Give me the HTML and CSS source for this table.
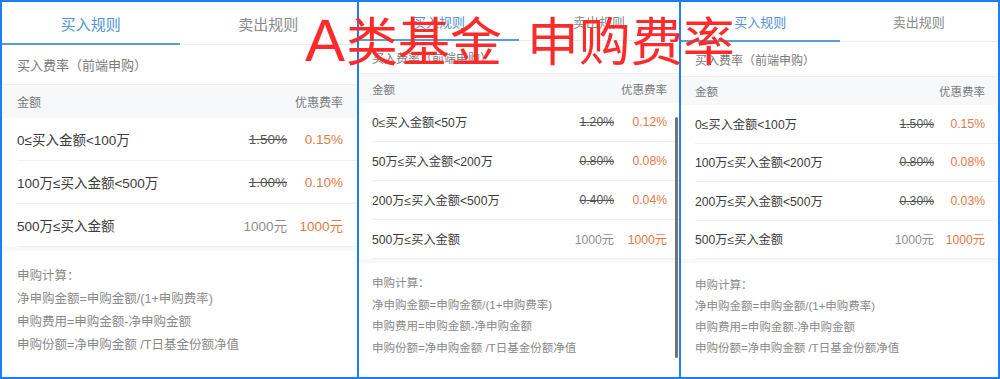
FILE: index.html
```html
<!DOCTYPE html>
<html lang="zh-CN">
<head>
<meta charset="utf-8">
<title>A类基金 申购费率</title>
<link rel="stylesheet" href="styles.css">
</head>
<body>
<div class="frame">
  <section class="panel p1">
    <div class="tabs"><div class="tab active">买入规则</div><div class="tab">卖出规则</div></div>
    <div class="subtitle">买入费率（前端申购）</div>
    <div class="thead"><span>金额</span><span>优惠费率</span></div>
    <div class="row"><span class="range">0≤买入金额&lt;100万</span><span class="old strike">1.50%</span><span class="new">0.15%</span></div>
    <div class="row"><span class="range">100万≤买入金额&lt;500万</span><span class="old strike">1.00%</span><span class="new">0.10%</span></div>
    <div class="row"><span class="range">500万≤买入金额</span><span class="old">1000元</span><span class="new">1000元</span></div>
    <div class="calc">
      <p>申购计算：</p>
      <p>净申购金额=申购金额/(1+申购费率)</p>
      <p>申购费用=申购金额-净申购金额</p>
      <p>申购份额=净申购金额 /T日基金份额净值</p>
    </div>
  </section>
  <section class="panel p2">
    <div class="tabs"><div class="tab active">买入规则</div><div class="tab">卖出规则</div></div>
    <div class="subtitle">买入费率（前端申购）</div>
    <div class="thead"><span>金额</span><span>优惠费率</span></div>
    <div class="row"><span class="range">0≤买入金额&lt;50万</span><span class="old strike">1.20%</span><span class="new">0.12%</span></div>
    <div class="row"><span class="range">50万≤买入金额&lt;200万</span><span class="old strike">0.80%</span><span class="new">0.08%</span></div>
    <div class="row"><span class="range">200万≤买入金额&lt;500万</span><span class="old strike">0.40%</span><span class="new">0.04%</span></div>
    <div class="row"><span class="range">500万≤买入金额</span><span class="old">1000元</span><span class="new">1000元</span></div>
    <div class="calc">
      <p>申购计算：</p>
      <p>净申购金额=申购金额/(1+申购费率)</p>
      <p>申购费用=申购金额-净申购金额</p>
      <p>申购份额=净申购金额 /T日基金份额净值</p>
    </div>
    <div class="scrollbar"></div>
  </section>
  <section class="panel p3">
    <div class="tabs"><div class="tab active">买入规则</div><div class="tab">卖出规则</div></div>
    <div class="subtitle">买入费率（前端申购）</div>
    <div class="thead"><span>金额</span><span>优惠费率</span></div>
    <div class="row"><span class="range">0≤买入金额&lt;100万</span><span class="old strike">1.50%</span><span class="new">0.15%</span></div>
    <div class="row"><span class="range">100万≤买入金额&lt;200万</span><span class="old strike">0.80%</span><span class="new">0.08%</span></div>
    <div class="row"><span class="range">200万≤买入金额&lt;500万</span><span class="old strike">0.30%</span><span class="new">0.03%</span></div>
    <div class="row"><span class="range">500万≤买入金额</span><span class="old">1000元</span><span class="new">1000元</span></div>
    <div class="calc">
      <p>申购计算：</p>
      <p>净申购金额=申购金额/(1+申购费率)</p>
      <p>申购费用=申购金额-净申购金额</p>
      <p>申购份额=净申购金额 /T日基金份额净值</p>
    </div>
  </section>
  <div class="overlay"><span class="big-a">A</span>类基金 申购费率</div>
</div>
</body>
</html>
```

FILE: styles.css
```css
* { box-sizing: border-box; }
html, body { margin: 0; padding: 0; }
body {
  width: 1000px;
  height: 379px;
  overflow: hidden;
  background: #ffffff;
  font-family: "Liberation Sans", "Noto Sans CJK SC", sans-serif;
}
.frame {
  position: relative;
  display: flex;
  gap: 2px;
  padding: 2px;
  width: 1000px;
  height: 379px;
  background: #1d7ff3;
}
.panel {
  position: relative;
  background: #ffffff;
  overflow: hidden;
  display: flex;
  flex-direction: column;
}
.p1 {
  width: 355px;
  --tab-h: 43px; --tab-fs: 15px;
  --sub-h: 39px; --sub-fs: 13px;
  --head-h: 34px; --head-fs: 12px;
  --row-h: 43px; --row-fs: 13.5px;
  --pl: 15px; --pr: 14px; --val-w: 56px;
  --calc-fs: 12.5px; --calc-lh: 23px; --calc-pt: 14px;
}
.p2 {
  width: 320px;
  --tab-h: 39px; --tab-fs: 13px;
  --sub-h: 32px; --sub-fs: 12px;
  --head-h: 30px; --head-fs: 11.5px;
  --row-h: 39px; --row-fs: 12.2px;
  --pl: 13px; --pr: 12px; --val-w: 53px;
  --calc-fs: 11.5px; --calc-lh: 21.5px; --calc-pt: 10px;
}
.p3 {
  width: 317px;
  --tab-h: 40px; --tab-fs: 13px;
  --sub-h: 34px; --sub-fs: 12px;
  --head-h: 29px; --head-fs: 11.5px;
  --row-h: 38.5px; --row-fs: 12.2px;
  --pl: 14px; --pr: 13px; --val-w: 51px;
  --calc-fs: 11.5px; --calc-lh: 21px; --calc-pt: 12px;
}
.tabs {
  display: flex;
  height: var(--tab-h);
  border-bottom: 1px solid #ececec;
  flex: none;
}
.tab {
  position: relative;
  flex: 1;
  display: flex;
  align-items: center;
  justify-content: center;
  font-size: var(--tab-fs);
  color: #8a8a8a;
}
.tab.active { color: #4f93d6; }
.tab.active::after {
  content: "";
  position: absolute;
  left: 0; right: 0; bottom: -1px;
  height: 2px;
  background: #5b9bd8;
}
.subtitle {
  flex: none;
  height: var(--sub-h);
  display: flex;
  align-items: center;
  padding-left: var(--pl);
  font-size: var(--sub-fs);
  color: #7a7a7a;
}
.thead {
  flex: none;
  height: var(--head-h);
  display: flex;
  align-items: center;
  justify-content: space-between;
  padding: 0 var(--pr) 0 var(--pl);
  background: #f7f8fa;
  border-top: 1px solid #efefef;
  font-size: var(--head-fs);
  color: #7a7a7a;
}
.row {
  flex: none;
  height: var(--row-h);
  display: flex;
  align-items: center;
  margin-left: var(--pl);
  padding-right: var(--pr);
  border-bottom: 1px solid #f0f0f0;
  font-size: var(--row-fs);
  color: #3c3c3c;
}
.range { flex: 1; }
.old { color: #8f8f8f; text-align: right; }
.old.strike { color: #555555; text-decoration: line-through; }
.new { width: var(--val-w); text-align: right; color: #e27a47; flex: none; }
.calc {
  flex: none;
  border-top: 4px solid #f8f8f8;
  padding: var(--calc-pt) 0 0 var(--pl);
  font-size: var(--calc-fs);
  line-height: var(--calc-lh);
  color: #8a8a8a;
}
.calc p { margin: 0; }
.scrollbar {
  position: absolute;
  right: 1px;
  top: 115px;
  width: 3px;
  height: 241px;
  border-radius: 2px;
  background: #727272;
}
.overlay {
  position: absolute;
  left: 305px;
  top: 9px;
  font-family: "Noto Sans CJK SC", sans-serif;
  font-size: 52px;
  line-height: 60px;
  color: #ff2b2b;
  white-space: nowrap;
  word-spacing: 13px;
}
.big-a {
  font-family: "Liberation Sans", sans-serif;
  font-size: 60px;
  margin-right: 1px;
}
```
